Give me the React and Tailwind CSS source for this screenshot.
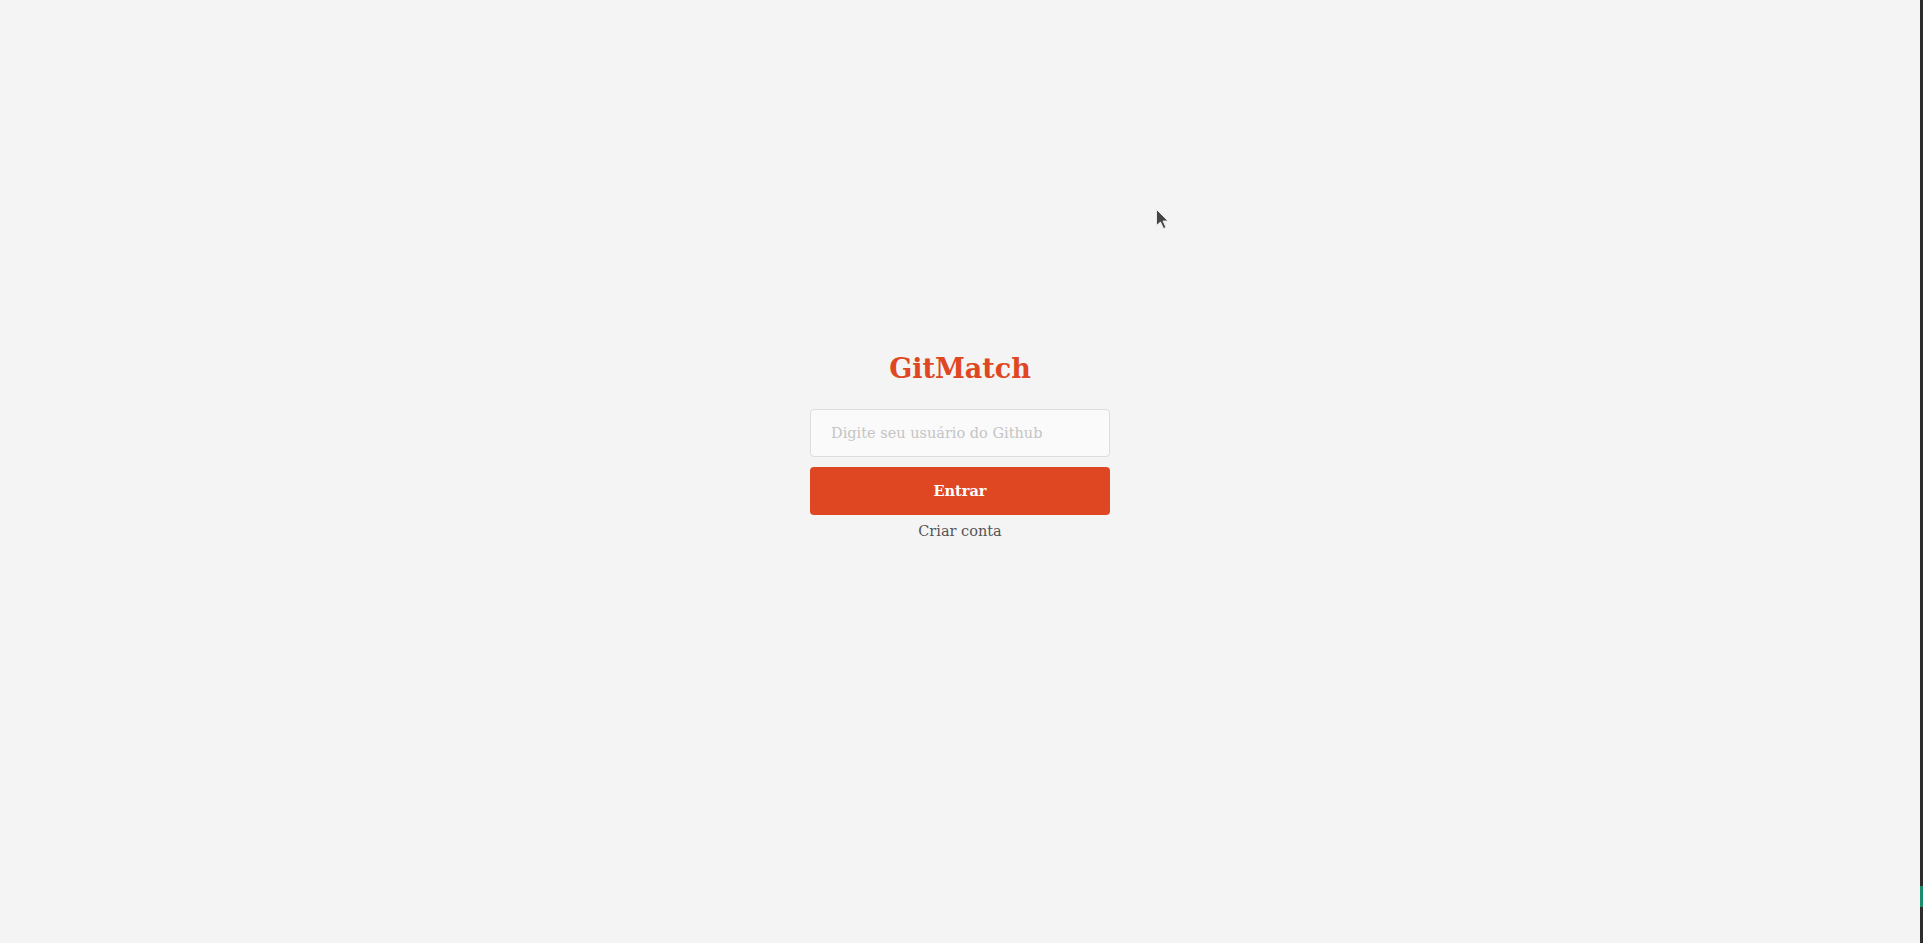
export default function App() {
  const font = { fontFamily: '"Roboto Slab", "DejaVu Serif", "Liberation Serif", serif' };
  return (
    <div className="flex h-[943px] w-full overflow-hidden bg-[#f4f4f4]" style={font}>
      <div className="relative flex-1">
        <div className="flex flex-col items-center pt-[348px]">
          <h1 className="text-[27px] leading-[42px] font-bold text-[#df4723]">GitMatch</h1>
          <div className="mt-[19px] flex w-[300px] flex-col">
            <input
              type="text"
              placeholder="Digite seu usuário do Github"
              className="h-[48px] w-full rounded-[4px] border border-[#dddddd] bg-[#fafafa] px-[20px] text-[14.5px] text-[#666] placeholder:text-[#c4c4c4] outline-none"
              style={font}
            />
            <button
              className="mt-[10px] h-[48px] w-full rounded-[4px] bg-[#df4723] text-[14.5px] font-bold text-white"
              style={font}
            >
              Entrar
            </button>
            <a className="mt-[5px] text-center text-[14.5px] leading-[22px] text-[#555]">Criar conta</a>
          </div>
        </div>
        <svg className="absolute left-[1155px] top-[208px]" width="15" height="23" viewBox="0 0 15 23">
          <path d="M1.5 1.5 L1.5 17.5 L5.5 14 L8.5 20.5 L11 19.5 L8 13 L13 13 Z" fill="#454545" stroke="#e8e8e8" strokeWidth="1" />
        </svg>
      </div>
      <div className="flex w-[3px] flex-col bg-[#2d2d2d]">
        <div className="mt-[886px] h-[21px] bg-[#1b8c6c]" />
      </div>
    </div>
  );
}
